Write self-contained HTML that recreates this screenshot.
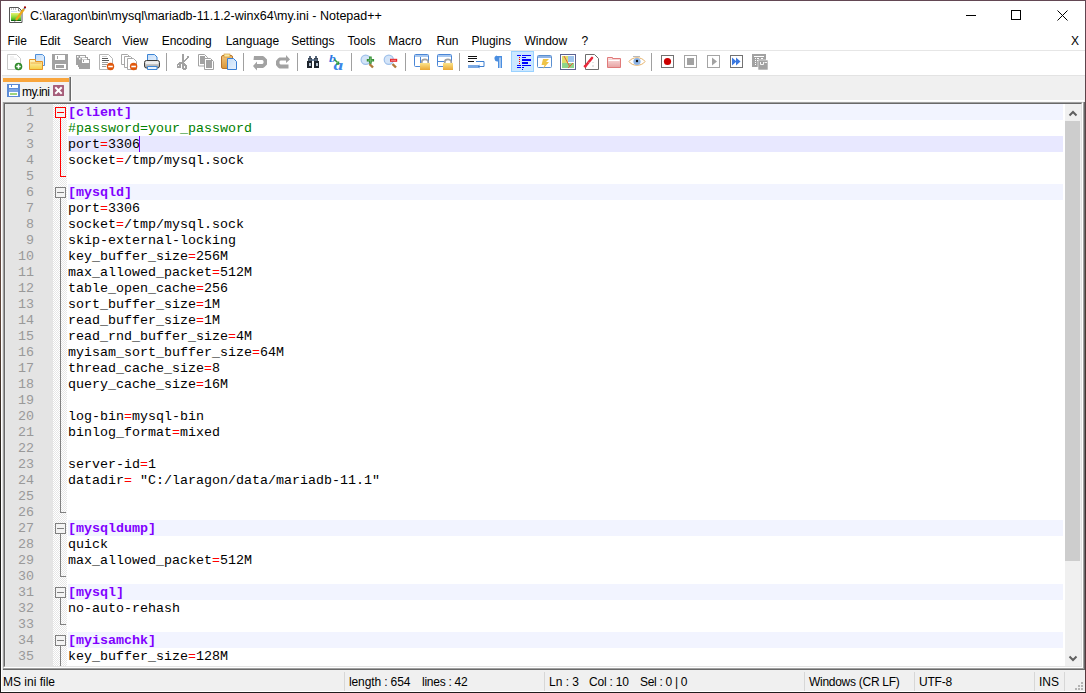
<!DOCTYPE html>
<html><head><meta charset="utf-8"><style>
*{margin:0;padding:0;box-sizing:border-box}
html,body{width:1086px;height:693px;overflow:hidden}
body{position:relative;background:#f0f0f0;font-family:"Liberation Sans",sans-serif;color:#000}
.a{position:absolute}
#title{left:0;top:0;width:1086px;height:31px;background:#fff}
#menubar{left:0;top:31px;width:1086px;height:19px;background:#fff}
.mn{top:34px;font-size:12px;line-height:14px;white-space:nowrap}
#tb{left:0;top:50px;width:1086px;height:25px;background:#fff;border-top:1px solid #e6e6e6;}
#tabbar{left:0;top:75px;width:1086px;height:27px;background:#f0f0f0;border-top:1px solid #e3e3e3}
#ed0{left:3px;top:102px;width:1082px;height:568px;border-right:1px solid #696969;border-bottom:1px solid #696969}
#ed01{left:3px;top:102px;width:1081px;height:567px;border-right:1px solid #a0a0a0;border-bottom:1px solid #a0a0a0}
#ed{left:3px;top:102px;width:1080px;height:566px;border-top:1px solid #a0a0a0;border-left:1px solid #a0a0a0;border-right:1px solid #fff;border-bottom:1px solid #fff;background:#fff}
#ed2{left:4px;top:103px;width:1078px;height:564px;border-top:1px solid #696969;border-left:1px solid #696969;border-right:1px solid #e3e3e3;border-bottom:1px solid #e3e3e3}
#lnm{left:5px;top:104px;width:48px;height:562px;background:#e4e4e4}
#fold{left:53px;top:104px;width:14px;height:562px;background-color:#fff;background-image:conic-gradient(#e6e6e6 25%,#fff 0 50%,#e6e6e6 0 75%,#fff 0);background-size:2px 2px}
.ln{position:absolute;left:68px;width:995px;height:16px;font-family:"Liberation Mono",monospace;font-size:13.333px;line-height:16px;white-space:pre;color:#000}
.ln.sec{background:#f2f4ff}
.ln.cur{background:#e8e8ff}
.num{position:absolute;left:-63px;top:1px;width:29px;text-align:right;color:#999}
.tx{position:relative;top:1px}
.s{color:#8000ff;font-weight:bold}
.c{color:#008000}
.eq{color:#ff0000}
#caret{left:139px;top:136px;width:1px;height:16px;background:#8000ff}
#sb{left:1065px;top:104px;width:16px;height:562px;background:#f0f0f0}
#thumb{left:1065px;top:121px;width:15px;height:440px;background:#cdcdcd}
#status{left:0;top:670px;width:1086px;height:23px;background:#f0f0f0}
.st{top:675px;font-size:12px;line-height:14px;white-space:nowrap}
.sep{top:672px;width:1px;height:19px;background:#d7d7d7}
#bl{left:0;top:0;width:1px;height:693px;background:linear-gradient(#634753,#5e4438 45%,#1c1a16 70%,#1c1c1c)}
#br{left:1085px;top:0;width:1px;height:693px;background:linear-gradient(#634753,#4a3a30 45%,#3a2a2a 70%,#5a3a40)}
#bt{left:0;top:0;width:1086px;height:1px;background:#634753}
#bb{left:0;top:692px;width:1086px;height:1px;background:#1e1c1c}
</style></head><body>
<div class="a" id="title"></div>
<span class="a" style="left:30px;top:9px;font-size:12.5px;line-height:15px;white-space:nowrap">C:\laragon\bin\mysql\mariadb-11.1.2-winx64\my.ini - Notepad++</span>
<div class="a" style="left:966px;top:15px;width:10px;height:1px;background:#000"></div>
<div class="a" style="left:1011px;top:10px;width:10px;height:10px;border:1px solid #000"></div>
<svg class="a" style="left:1056px;top:9px" width="13" height="13"><path d="M1.5 1.5L11.5 11.5M11.5 1.5L1.5 11.5" stroke="#000" stroke-width="1"/></svg>
<div class="a" id="menubar"></div>
<span class="a mn" style="left:7.6px">File</span><span class="a mn" style="left:39.7px">Edit</span><span class="a mn" style="left:73.3px">Search</span><span class="a mn" style="left:122.3px">View</span><span class="a mn" style="left:161.7px">Encoding</span><span class="a mn" style="left:225.7px">Language</span><span class="a mn" style="left:291.2px">Settings</span><span class="a mn" style="left:347.5px">Tools</span><span class="a mn" style="left:388.3px">Macro</span><span class="a mn" style="left:436.5px">Run</span><span class="a mn" style="left:471.6px">Plugins</span><span class="a mn" style="left:524.5px">Window</span><span class="a mn" style="left:581.6px">?</span>
<span class="a mn" style="left:1071px">X</span>
<div class="a" id="tb"></div>
<svg class="a" style="left:0;top:0" width="1086" height="80">
<defs>
<linearGradient id="gfold" x1="0" y1="0" x2="0" y2="1"><stop offset="0" stop-color="#fff6c8"/><stop offset="1" stop-color="#f5cf45"/></linearGradient>
<linearGradient id="gblue" x1="0" y1="0" x2="1" y2="1"><stop offset="0" stop-color="#c4dcf8"/><stop offset="1" stop-color="#e9f3fd"/></linearGradient>
<linearGradient id="gclip" x1="0" y1="0" x2="0" y2="1"><stop offset="0" stop-color="#f2c47a"/><stop offset="1" stop-color="#d9963a"/></linearGradient>
<linearGradient id="glock" x1="0" y1="0" x2="0" y2="1"><stop offset="0" stop-color="#fbe38a"/><stop offset="1" stop-color="#eaa834"/></linearGradient>
<linearGradient id="gpink" x1="0" y1="0" x2="0" y2="1"><stop offset="0" stop-color="#fbe3e3"/><stop offset="1" stop-color="#e7a2a2"/></linearGradient>
</defs>
<!-- new -->
<path d="M7.5 54.5h9l4 4v11h-13z" fill="#fff" stroke="#c9c9c9"/>
<path d="M10 57h4M10 59h7" stroke="#e6e6e6"/>
<circle cx="18.5" cy="66.5" r="3.8" fill="#2f8a2a"/>
<path d="M18.5 64.3v4.4M16.3 66.5h4.4" stroke="#fff" stroke-width="1.6"/>
<!-- open -->
<path d="M35.5 54.5h7l2 2v9h-9z" fill="url(#gblue)" stroke="#4f8fd9"/>
<path d="M29.5 59.5h6v2h7v8h-13z" fill="url(#gfold)" stroke="#e69526"/>
<path d="M30.5 63h11" stroke="#f0b24a"/>
<!-- save (disabled) -->
<path d="M52 54h16v16h-15l-1-1z" fill="#a2a2a2"/>
<rect x="55" y="55" width="10" height="5" fill="#fff"/>
<rect x="57" y="56" width="1" height="3" fill="#a2a2a2"/>
<rect x="55" y="64" width="11" height="5" fill="#fff"/>
<rect x="56" y="65" width="8" height="3" fill="#a2a2a2"/>
<!-- save all -->
<path d="M76 55h10v2h2v2h2v10h-11v-2h-1v-2h-2z" fill="#a2a2a2"/>
<rect x="77" y="56" width="1.5" height="1.5" fill="#fff"/><rect x="80" y="56" width="5" height="1.5" fill="#fff"/>
<rect x="79" y="58" width="1.5" height="1.5" fill="#fff"/><rect x="82" y="58" width="5" height="1.5" fill="#fff"/>
<rect x="82" y="60" width="7" height="3" fill="#fff"/><rect x="83" y="60" width="1" height="2" fill="#a2a2a2"/>
<!-- close -->
<path d="M99.5 54.5h9l4 4v11h-13z" fill="#fff" stroke="#b4b4b4"/>
<path d="M102 56.5h5" stroke="#d0d0d0"/><path d="M102 58.5h6M102 60.5h7" stroke="#5a5a5a"/><path d="M102 62.5h6M102 64.5h5M102 66.5h4" stroke="#9a9a9a"/>
<circle cx="110.5" cy="66.5" r="3.7" fill="#e0580c"/>
<path d="M108.2 66.5h4.6" stroke="#fff" stroke-width="1.6"/>
<!-- close all -->
<path d="M121.5 54.5h6l2 2v8h-8z" fill="#fff" stroke="#a8a8a8"/>
<path d="M124.5 56.5h6l2 2v9h-8z" fill="#fff" stroke="#a8a8a8"/>
<path d="M127.5 58.5h6l3 3v8h-9z" fill="#fff" stroke="#a8a8a8"/>
<circle cx="133.6" cy="66.5" r="3.7" fill="#e0580c"/>
<path d="M131.3 66.5h4.6" stroke="#fff" stroke-width="1.6"/>
<!-- print -->
<defs><linearGradient id="gpr" x1="0" y1="0" x2="0" y2="1"><stop offset="0" stop-color="#f4f4f4"/><stop offset="0.5" stop-color="#c8c8c8"/><stop offset="1" stop-color="#9a9a9a"/></linearGradient></defs>
<path d="M147.5 54.5h7l2.5 2.5v5.5h-9.5z" fill="url(#gblue)" stroke="#3c84d4"/>
<rect x="144.5" y="60.5" width="15" height="7.5" rx="2" fill="url(#gpr)" stroke="#3c3c3c"/>
<rect x="146" y="62" width="12" height="2" fill="#eeeeee"/>
<path d="M147.5 66.5h9.5v3h-9.5z" fill="#eaf4ff" stroke="#3c84d4"/>
<!-- sep -->
<rect x="166" y="53" width="1" height="18" fill="#a0a0a0"/>
<!-- cut -->
<g fill="#a2a2a2">
<rect x="182" y="54" width="2" height="10"/>
<path d="M187 56h2v2h-1v1h-1v1h-1v1h-1v1h-1v1h-1v-2h1v-1h1v-1h1v-1h1z"/>
<rect x="179" y="62" width="5" height="2"/>
<path d="M178 63h2v1h1v4h-4v-4h1z M178 65v1h1v-1z" fill-rule="evenodd"/>
<path d="M182 64h1v-1h2v1h1v1h1v4h-1v1h-3v-1h-1z M184 66v2h1v-2z" fill-rule="evenodd"/>
</g>
<!-- copy -->
<path d="M198.5 54.5h6l3 3v8.5h-9z" fill="#fff" stroke="#a2a2a2"/>
<rect x="200" y="56" width="5" height="8" fill="#a2a2a2"/>
<path d="M204.5 58.5h6l3 3v8h-9z" fill="#fff" stroke="#a2a2a2"/>
<rect x="206" y="60" width="6" height="8" fill="#a2a2a2"/>
<!-- paste -->
<rect x="221.5" y="55.5" width="11" height="13" rx="1.5" fill="url(#gclip)" stroke="#b9742a"/>
<rect x="224" y="54" width="6" height="3" fill="#fbe9a0" stroke="#c98a2a" stroke-width="0.6"/>
<path d="M227.5 58.5h6l3 3v8h-9z" fill="url(#gblue)" stroke="#3a7fd5"/>
<!-- sep -->
<rect x="243" y="53" width="1" height="18" fill="#a0a0a0"/>
<!-- undo -->
<path d="M254 56h9l1.5 1l2.5 2.5v5l-2.5 2.5l-1.5 1h-6v2.5l-4-4.5l4-4.5v2.5h5.5l1-1v-2l-1-1h-9z" fill="#a2a2a2"/>
<!-- redo -->
<path d="M290 59.5l-4-4.5v2.5h-6.5l-1.5 1l-2 2.5v4l2 2.5l1.5 1h9v-4h-8l-1-1v-2l1-1h5.5v2.5z" fill="#a2a2a2"/>
<!-- sep -->
<rect x="297" y="53" width="1" height="18" fill="#a0a0a0"/>
<!-- find -->
<path d="M307 61h5v7h-5zM314 61h5v7h-5z" fill="#1c232b"/>
<path d="M308 58h4v3h-4zM314 58h4v3h-4z" fill="#3a4655"/>
<path d="M309 56h2v2h-2zM315 56h2v2h-2z" fill="#55657a"/>
<path d="M312 59h2v2h-2z" fill="#6f86a3"/>
<rect x="309" y="63" width="2" height="3" fill="#b4c2d0"/><rect x="316" y="63" width="2" height="3" fill="#b4c2d0"/>
<path d="M308.5 60h3M314.5 60h3" stroke="#8aa0bb" stroke-width="0.8"/>
<!-- replace -->
<text transform="translate(329,62) scale(1.3,1)" x="0" y="0" font-family="Liberation Serif" font-style="italic" font-weight="bold" font-size="10.5" fill="#2a78e4">b</text>
<text transform="translate(333.5,69.8) scale(1.25,1)" x="0" y="0" font-family="Liberation Serif" font-style="italic" font-weight="bold" font-size="15.5" fill="#3a86e8">a</text>
<path d="M334.5 59.5l3 3M338.5 61.5v2.5h-2.5" stroke="#2f9a3a" stroke-width="1.5" fill="none"/>
<!-- sep -->
<rect x="351" y="53" width="1" height="18" fill="#a0a0a0"/>
<!-- zoom in -->
<path d="M369.5 64l3.5 3.5" stroke="#b07a3a" stroke-width="2.4"/>
<circle cx="365.7" cy="59.8" r="4.6" fill="#d3e4f8" stroke="#9fc0ea" stroke-width="1.2"/>
<path d="M370.4 56.5v7.3M366.8 60.2h7.3" stroke="#2e8b2e" stroke-width="2.6"/>
<path d="M370.4 57.5v5.3M367.8 60.2h5.3" stroke="#7fc27f" stroke-width="0.8"/>
<!-- zoom out -->
<path d="M392.5 64l3.5 3.5" stroke="#b07a3a" stroke-width="2.4"/>
<circle cx="388.8" cy="59.8" r="4.6" fill="#d3e4f8" stroke="#9fc0ea" stroke-width="1.2"/>
<rect x="390" y="58.8" width="7.2" height="3" fill="#e8252a"/>
<path d="M391 60.3h5" stroke="#f7a0a0" stroke-width="0.8"/>
<!-- sep -->
<rect x="405" y="53" width="1" height="18" fill="#a0a0a0"/>
<!-- sync v -->
<rect x="414.5" y="54.5" width="14" height="12" rx="1" fill="#fff" stroke="#4a86d6"/>
<rect x="415" y="55" width="13" height="2" fill="#a8c8f0"/>
<path d="M420.5 57v9" stroke="#4a86d6"/>
<path d="M421.8 63.5v-1.5a3.2 2.6 0 0 1 6.4 0v1.5" fill="none" stroke="#a0a0a0" stroke-width="1.7"/>
<rect x="420" y="63" width="10" height="7" fill="url(#glock)"/>
<!-- sync h -->
<rect x="437.5" y="54.5" width="14" height="12" rx="1" fill="#fff" stroke="#4a86d6"/>
<rect x="438" y="55" width="13" height="2" fill="#a8c8f0"/>
<path d="M438 61.5h6" stroke="#4a86d6"/>
<path d="M444.8 63.5v-1.5a3.2 2.6 0 0 1 6.4 0v1.5" fill="none" stroke="#a0a0a0" stroke-width="1.7"/>
<rect x="443" y="63" width="10" height="7" fill="url(#glock)"/>
<!-- sep -->
<rect x="459" y="53" width="1" height="18" fill="#a0a0a0"/>
<!-- wrap -->
<path d="M468 56.5h9M468 58.5h9M468 61.5h6" stroke="#111" stroke-width="1"/>
<path d="M476 61.5h8v5h-5" stroke="#3d7fd0" stroke-width="1" fill="none"/>
<path d="M479.5 64.5l-2.5 2l2.5 2z" fill="#3d7fd0"/>
<rect x="468" y="65" width="10" height="3" fill="#7aa9e4"/>
<!-- pilcrow -->
<path d="M497 56h5v12h-1.5v-10.5h-1v10.5h-1.5v-6.5a3 3 0 0 1 -1 -6z" fill="#4a8ee0"/>
<!-- indent guide active -->
<rect x="511.5" y="51.5" width="22" height="20" fill="#cce8ff" stroke="#99d1ff"/>
<g fill="#0000ff">
<rect x="517" y="55" width="4" height="1"/><rect x="522" y="55" width="9" height="1"/>
<rect x="522" y="57" width="4" height="1"/>
<rect x="522" y="59" width="9" height="2"/>
<rect x="522" y="62" width="6" height="2"/>
<rect x="517" y="65" width="4" height="1"/><rect x="522" y="65" width="9" height="1"/>
<rect x="517" y="67" width="4" height="1"/><rect x="522" y="67" width="2" height="1"/>
<rect x="522" y="69" width="1" height="1"/>
</g>
<g fill="#ff0000"><rect x="519" y="57" width="1" height="1"/><rect x="519" y="59" width="1" height="1"/><rect x="519" y="61" width="1" height="1"/><rect x="519" y="63" width="1" height="1"/></g>
<!-- launch window -->
<rect x="537.5" y="55.5" width="14" height="12" rx="1" fill="#fff" stroke="#5a8fd0"/>
<rect x="538" y="56" width="13" height="2" fill="#8fb4e6"/>
<path d="M543 59h6l-3 3h3l-6 7l1.5-4h-3z" fill="#efc447"/>
<!-- doc map -->
<rect x="560.5" y="54.5" width="15" height="15" fill="#fff" stroke="#5d6390"/>
<rect x="562" y="56" width="6" height="7" fill="#dede6a"/>
<rect x="568" y="56" width="6" height="6" fill="#9ec4ec"/>
<rect x="562" y="63" width="12" height="5" fill="#8fd48a"/>
<path d="M564 56l6 11M573 63l-5 5" stroke="#ea5a3c" stroke-width="1"/>
<!-- function list -->
<path d="M585.5 54.5h9l4 4v11h-13z" fill="#fff" stroke="#6e6e6e"/>
<path d="M592 58l-6.5 8" stroke="#e8283a" stroke-width="2.6" stroke-linecap="round"/><path d="M584 65.5l2 2" stroke="#e8283a" stroke-width="1.8"/><path d="M593 62v1M593 65v2M589 62v1" stroke="#bbb" stroke-width="0.8"/>
<!-- folder ws -->
<path d="M607.5 57.5h5v1h8v9h-13z" fill="url(#gpink)" stroke="#e07a7a"/>
<path d="M608.5 60.5h11" stroke="#fff" stroke-width="1"/>
<!-- eye -->
<path d="M629 61.5c3-5 13-5 16 0c-3 5-13 5-16 0z" fill="#fff" stroke="#e6b26a" stroke-width="1"/>
<circle cx="637" cy="61.5" r="3.6" fill="#8db4e6"/>
<circle cx="637" cy="61" r="1.2" fill="#111"/>
<path d="M633 56.5h7" stroke="#b8b8b8"/>
<!-- sep -->
<rect x="651" y="53" width="1" height="18" fill="#a0a0a0"/>
<!-- record -->
<rect x="661.5" y="55.5" width="12" height="12" fill="#fff" stroke="#727272"/>
<circle cx="667.5" cy="61.5" r="3.6" fill="#cc0000"/>
<!-- stop -->
<rect x="684.5" y="55.5" width="12" height="12" fill="#fff" stroke="#a4a4a4"/>
<rect x="687" y="58" width="7" height="7" fill="#a2a2a2"/>
<!-- play -->
<rect x="707.5" y="55.5" width="12" height="12" fill="#fff" stroke="#a4a4a4"/>
<path d="M712 57.5l5 4l-5 4z" fill="#a2a2a2"/>
<!-- play multi -->
<rect x="730.5" y="55.5" width="12" height="12" fill="#fff" stroke="#727272"/>
<path d="M732 57.5l4.5 4l-4.5 4zM736 57.5l4.5 4l-4.5 4z" fill="#3a78e0"/>
<!-- save macro -->
<rect x="752" y="54" width="14" height="13" fill="#a2a2a2"/>
<rect x="758" y="60" width="10" height="10" fill="#a2a2a2" stroke="#fff" stroke-width="0.6"/>
<path d="M754 56.5h10" stroke="#fff"/>
<g fill="#fff"><rect x="755" y="58" width="1" height="1"/><rect x="757" y="58" width="2" height="1"/><rect x="761" y="58" width="2" height="1"/><rect x="755" y="60" width="1" height="1"/><rect x="755" y="62" width="1" height="1"/><rect x="755" y="64" width="1" height="1"/><rect x="757" y="60" width="1" height="1"/></g>
<path d="M760.5 62v2.5h3v-2.5M764.5 62.5h2.5" stroke="#fff" fill="none" stroke-width="0.9"/>
</svg>
<div class="a" id="tabbar"></div>
<div class="a" style="left:3px;top:77px;width:67px;height:25px;background:#f2f2f2"></div>
<div class="a" style="left:3px;top:78px;width:66px;height:4px;background:#f9a53c"></div>
<div class="a" style="left:69px;top:77px;width:1px;height:24px;background:#a0a0a0"></div><div class="a" style="left:70px;top:77px;width:1px;height:24px;background:#696969"></div>
<span class="a" style="left:22px;top:85px;font-size:12px;letter-spacing:-0.5px;line-height:14px">my.ini</span>
<svg class="a" style="left:0;top:0" width="80" height="100" id="icons2">
<defs><linearGradient id="gnp" x1="0" y1="0" x2="0" y2="1"><stop offset="0" stop-color="#e8f070"/><stop offset="0.5" stop-color="#8fdc3c"/><stop offset="1" stop-color="#1e9a1e"/></linearGradient></defs>
<path d="M9.5 7.5h9l3.5 3.5v11.5h-12.5z" fill="#fff" stroke="#555" stroke-width="1"/>
<path d="M18.5 7.5v3.5h3.5" fill="none" stroke="#777" stroke-width="0.8"/>
<path d="M11 9h1M13 9h1M15 9h1" stroke="#888"/>
<rect x="11" y="11" width="6" height="0.8" fill="#c5d8ee"/>
<rect x="11" y="13" width="10" height="8" fill="url(#gnp)"/>
<rect x="11" y="20" width="10" height="1" fill="#0f6a0f"/>
<path d="M24 9l-8 11" stroke="#eba81a" stroke-width="2.2"/>
<path d="M24 9l1.2-1.7" stroke="#6a8fc0" stroke-width="1.6"/><circle cx="25" cy="7.3" r="1.1" fill="#a00000"/>
<path d="M15.3 20.2l-0.6 1.4" stroke="#555" stroke-width="1"/>
<!-- tab floppy -->
<rect x="7" y="84" width="13" height="13" fill="#5b8ad6"/>
<rect x="9" y="85" width="9" height="3" fill="#fff"/>
<rect x="11" y="85" width="1" height="2" fill="#5b8ad6"/>
<rect x="9" y="89" width="9" height="3" fill="#7ea5e4"/>
<rect x="9" y="92" width="9" height="4" fill="#fff"/>
<rect x="10" y="93" width="7" height="2" fill="#9fd47e"/>
<!-- tab close -->
<rect x="53" y="85" width="11" height="11" rx="0.5" fill="#a65e7a"/>
<path d="M56 88l5 5M61 88l-5 5" stroke="#fff" stroke-width="2" stroke-linecap="square"/>
</svg>
<div class="a" style="left:71px;top:100px;width:1013px;height:1px;background:#fff"></div><div class="a" style="left:71px;top:101px;width:1013px;height:1px;background:#f7f7f7"></div><div class="a" style="left:71px;top:77px;width:1px;height:23px;background:#fafafa"></div>
<div class="a" id="ed0"></div><div class="a" id="ed01"></div><div class="a" id="ed"></div>
<div class="a" id="ed2"></div>
<div class="a" id="lnm"></div><div class="a" style="left:1px;top:75px;width:1px;height:595px;background:#fff"></div><div class="a" style="left:2px;top:102px;width:1px;height:568px;background:#e3e3e3"></div><div class="a" style="left:5px;top:104px;width:1px;height:562px;background:#ebebeb"></div>

<div class="a" id="fold"></div>
<div class="ln sec" style="top:104px"><span class="num">1</span><span class="tx"><b class="s">[client]</b></span></div>
<div class="ln" style="top:120px"><span class="num">2</span><span class="tx"><span class="c">#password=your_password</span></span></div>
<div class="ln cur" style="top:136px"><span class="num">3</span><span class="tx">port<span class="eq">=</span>3306</span></div>
<div class="ln" style="top:152px"><span class="num">4</span><span class="tx">socket<span class="eq">=</span>/tmp/mysql.sock</span></div>
<div class="ln" style="top:168px"><span class="num">5</span><span class="tx"></span></div>
<div class="ln sec" style="top:184px"><span class="num">6</span><span class="tx"><b class="s">[mysqld]</b></span></div>
<div class="ln" style="top:200px"><span class="num">7</span><span class="tx">port<span class="eq">=</span>3306</span></div>
<div class="ln" style="top:216px"><span class="num">8</span><span class="tx">socket<span class="eq">=</span>/tmp/mysql.sock</span></div>
<div class="ln" style="top:232px"><span class="num">9</span><span class="tx">skip-external-locking</span></div>
<div class="ln" style="top:248px"><span class="num">10</span><span class="tx">key_buffer_size<span class="eq">=</span>256M</span></div>
<div class="ln" style="top:264px"><span class="num">11</span><span class="tx">max_allowed_packet<span class="eq">=</span>512M</span></div>
<div class="ln" style="top:280px"><span class="num">12</span><span class="tx">table_open_cache<span class="eq">=</span>256</span></div>
<div class="ln" style="top:296px"><span class="num">13</span><span class="tx">sort_buffer_size<span class="eq">=</span>1M</span></div>
<div class="ln" style="top:312px"><span class="num">14</span><span class="tx">read_buffer_size<span class="eq">=</span>1M</span></div>
<div class="ln" style="top:328px"><span class="num">15</span><span class="tx">read_rnd_buffer_size<span class="eq">=</span>4M</span></div>
<div class="ln" style="top:344px"><span class="num">16</span><span class="tx">myisam_sort_buffer_size<span class="eq">=</span>64M</span></div>
<div class="ln" style="top:360px"><span class="num">17</span><span class="tx">thread_cache_size<span class="eq">=</span>8</span></div>
<div class="ln" style="top:376px"><span class="num">18</span><span class="tx">query_cache_size<span class="eq">=</span>16M</span></div>
<div class="ln" style="top:392px"><span class="num">19</span><span class="tx"></span></div>
<div class="ln" style="top:408px"><span class="num">20</span><span class="tx">log-bin<span class="eq">=</span>mysql-bin</span></div>
<div class="ln" style="top:424px"><span class="num">21</span><span class="tx">binlog_format<span class="eq">=</span>mixed</span></div>
<div class="ln" style="top:440px"><span class="num">22</span><span class="tx"></span></div>
<div class="ln" style="top:456px"><span class="num">23</span><span class="tx">server-id<span class="eq">=</span>1</span></div>
<div class="ln" style="top:472px"><span class="num">24</span><span class="tx">datadir<span class="eq">=</span> &quot;C:/laragon/data/mariadb-11.1&quot;</span></div>
<div class="ln" style="top:488px"><span class="num">25</span><span class="tx"></span></div>
<div class="ln" style="top:504px"><span class="num">26</span><span class="tx"></span></div>
<div class="ln sec" style="top:520px"><span class="num">27</span><span class="tx"><b class="s">[mysqldump]</b></span></div>
<div class="ln" style="top:536px"><span class="num">28</span><span class="tx">quick</span></div>
<div class="ln" style="top:552px"><span class="num">29</span><span class="tx">max_allowed_packet<span class="eq">=</span>512M</span></div>
<div class="ln" style="top:568px"><span class="num">30</span><span class="tx"></span></div>
<div class="ln sec" style="top:584px"><span class="num">31</span><span class="tx"><b class="s">[mysql]</b></span></div>
<div class="ln" style="top:600px"><span class="num">32</span><span class="tx">no-auto-rehash</span></div>
<div class="ln" style="top:616px"><span class="num">33</span><span class="tx"></span></div>
<div class="ln sec" style="top:632px"><span class="num">34</span><span class="tx"><b class="s">[myisamchk]</b></span></div>
<div class="ln" style="top:648px"><span class="num">35</span><span class="tx">key_buffer_size<span class="eq">=</span>128M</span></div>
<svg class="a" style="left:0;top:0" width="1086" height="693" shape-rendering="crispEdges"><rect x="55.5" y="107.5" width="10" height="10" fill="#f3f3f3" stroke="#ff0000"/><line x1="57" y1="112.5" x2="64" y2="112.5" stroke="#ff0000"/><line x1="60.5" y1="118" x2="60.5" y2="177" stroke="#ff0000"/><line x1="60" y1="176.5" x2="66" y2="176.5" stroke="#ff0000"/><rect x="55.5" y="187.5" width="10" height="10" fill="#f3f3f3" stroke="#808080"/><line x1="57" y1="192.5" x2="64" y2="192.5" stroke="#808080"/><line x1="60.5" y1="198" x2="60.5" y2="513" stroke="#808080"/><line x1="60" y1="512.5" x2="66" y2="512.5" stroke="#808080"/><rect x="55.5" y="523.5" width="10" height="10" fill="#f3f3f3" stroke="#808080"/><line x1="57" y1="528.5" x2="64" y2="528.5" stroke="#808080"/><line x1="60.5" y1="534" x2="60.5" y2="577" stroke="#808080"/><line x1="60" y1="576.5" x2="66" y2="576.5" stroke="#808080"/><rect x="55.5" y="587.5" width="10" height="10" fill="#f3f3f3" stroke="#808080"/><line x1="57" y1="592.5" x2="64" y2="592.5" stroke="#808080"/><line x1="60.5" y1="598" x2="60.5" y2="625" stroke="#808080"/><line x1="60" y1="624.5" x2="66" y2="624.5" stroke="#808080"/><rect x="55.5" y="635.5" width="10" height="10" fill="#f3f3f3" stroke="#808080"/><line x1="57" y1="640.5" x2="64" y2="640.5" stroke="#808080"/><line x1="60.5" y1="646" x2="60.5" y2="666" stroke="#808080"/></svg>
<div class="a" id="caret"></div>
<div class="a" id="sb"></div>
<div class="a" id="thumb"></div>
<svg class="a" style="left:1065px;top:104px" width="16" height="562"><path d="M4.5 11.5l3.5-3.5l3.5 3.5" fill="none" stroke="#606060" stroke-width="2"/><path d="M4.5 552.5l3.5 3.5l3.5-3.5" fill="none" stroke="#606060" stroke-width="2"/></svg>

<div class="a" id="status"></div>
<span class="a st" style="left:3px">MS ini file</span>
<div class="a sep" style="left:344px"></div>
<span class="a st" style="left:349px;letter-spacing:-0.12px">length : 654</span>
<span class="a st" style="left:422px;letter-spacing:-0.26px">lines : 42</span>
<div class="a sep" style="left:544px"></div>
<span class="a st" style="left:549px">Ln : 3</span>
<span class="a st" style="left:589px;letter-spacing:-0.2px">Col : 10</span>
<span class="a st" style="left:640px;letter-spacing:-0.3px">Sel : 0 | 0</span>
<div class="a sep" style="left:804px"></div>
<span class="a st" style="left:809px;letter-spacing:-0.28px">Windows (CR LF)</span>
<div class="a sep" style="left:914px"></div>
<span class="a st" style="left:919px;letter-spacing:-0.2px">UTF-8</span>
<div class="a sep" style="left:1034px"></div>
<span class="a st" style="left:1039px">INS</span>
<div class="a sep" style="left:1064px"></div>
<svg class="a" style="left:1070px;top:678px" width="16" height="14" fill="#b4b4b4"><rect x="11" y="4" width="2" height="2"/><rect x="8" y="7" width="2" height="2"/><rect x="11" y="7" width="2" height="2"/><rect x="5" y="10" width="2" height="2"/><rect x="8" y="10" width="2" height="2"/><rect x="11" y="10" width="2" height="2"/></svg>
<div class="a" style="left:1px;top:691px;width:1084px;height:1px;background:#fff"></div><div class="a" style="left:1px;top:670px;width:1px;height:22px;background:#fff"></div><div class="a" id="bl"></div><div class="a" id="br"></div><div class="a" id="bt"></div><div class="a" id="bb"></div>
</body></html>
